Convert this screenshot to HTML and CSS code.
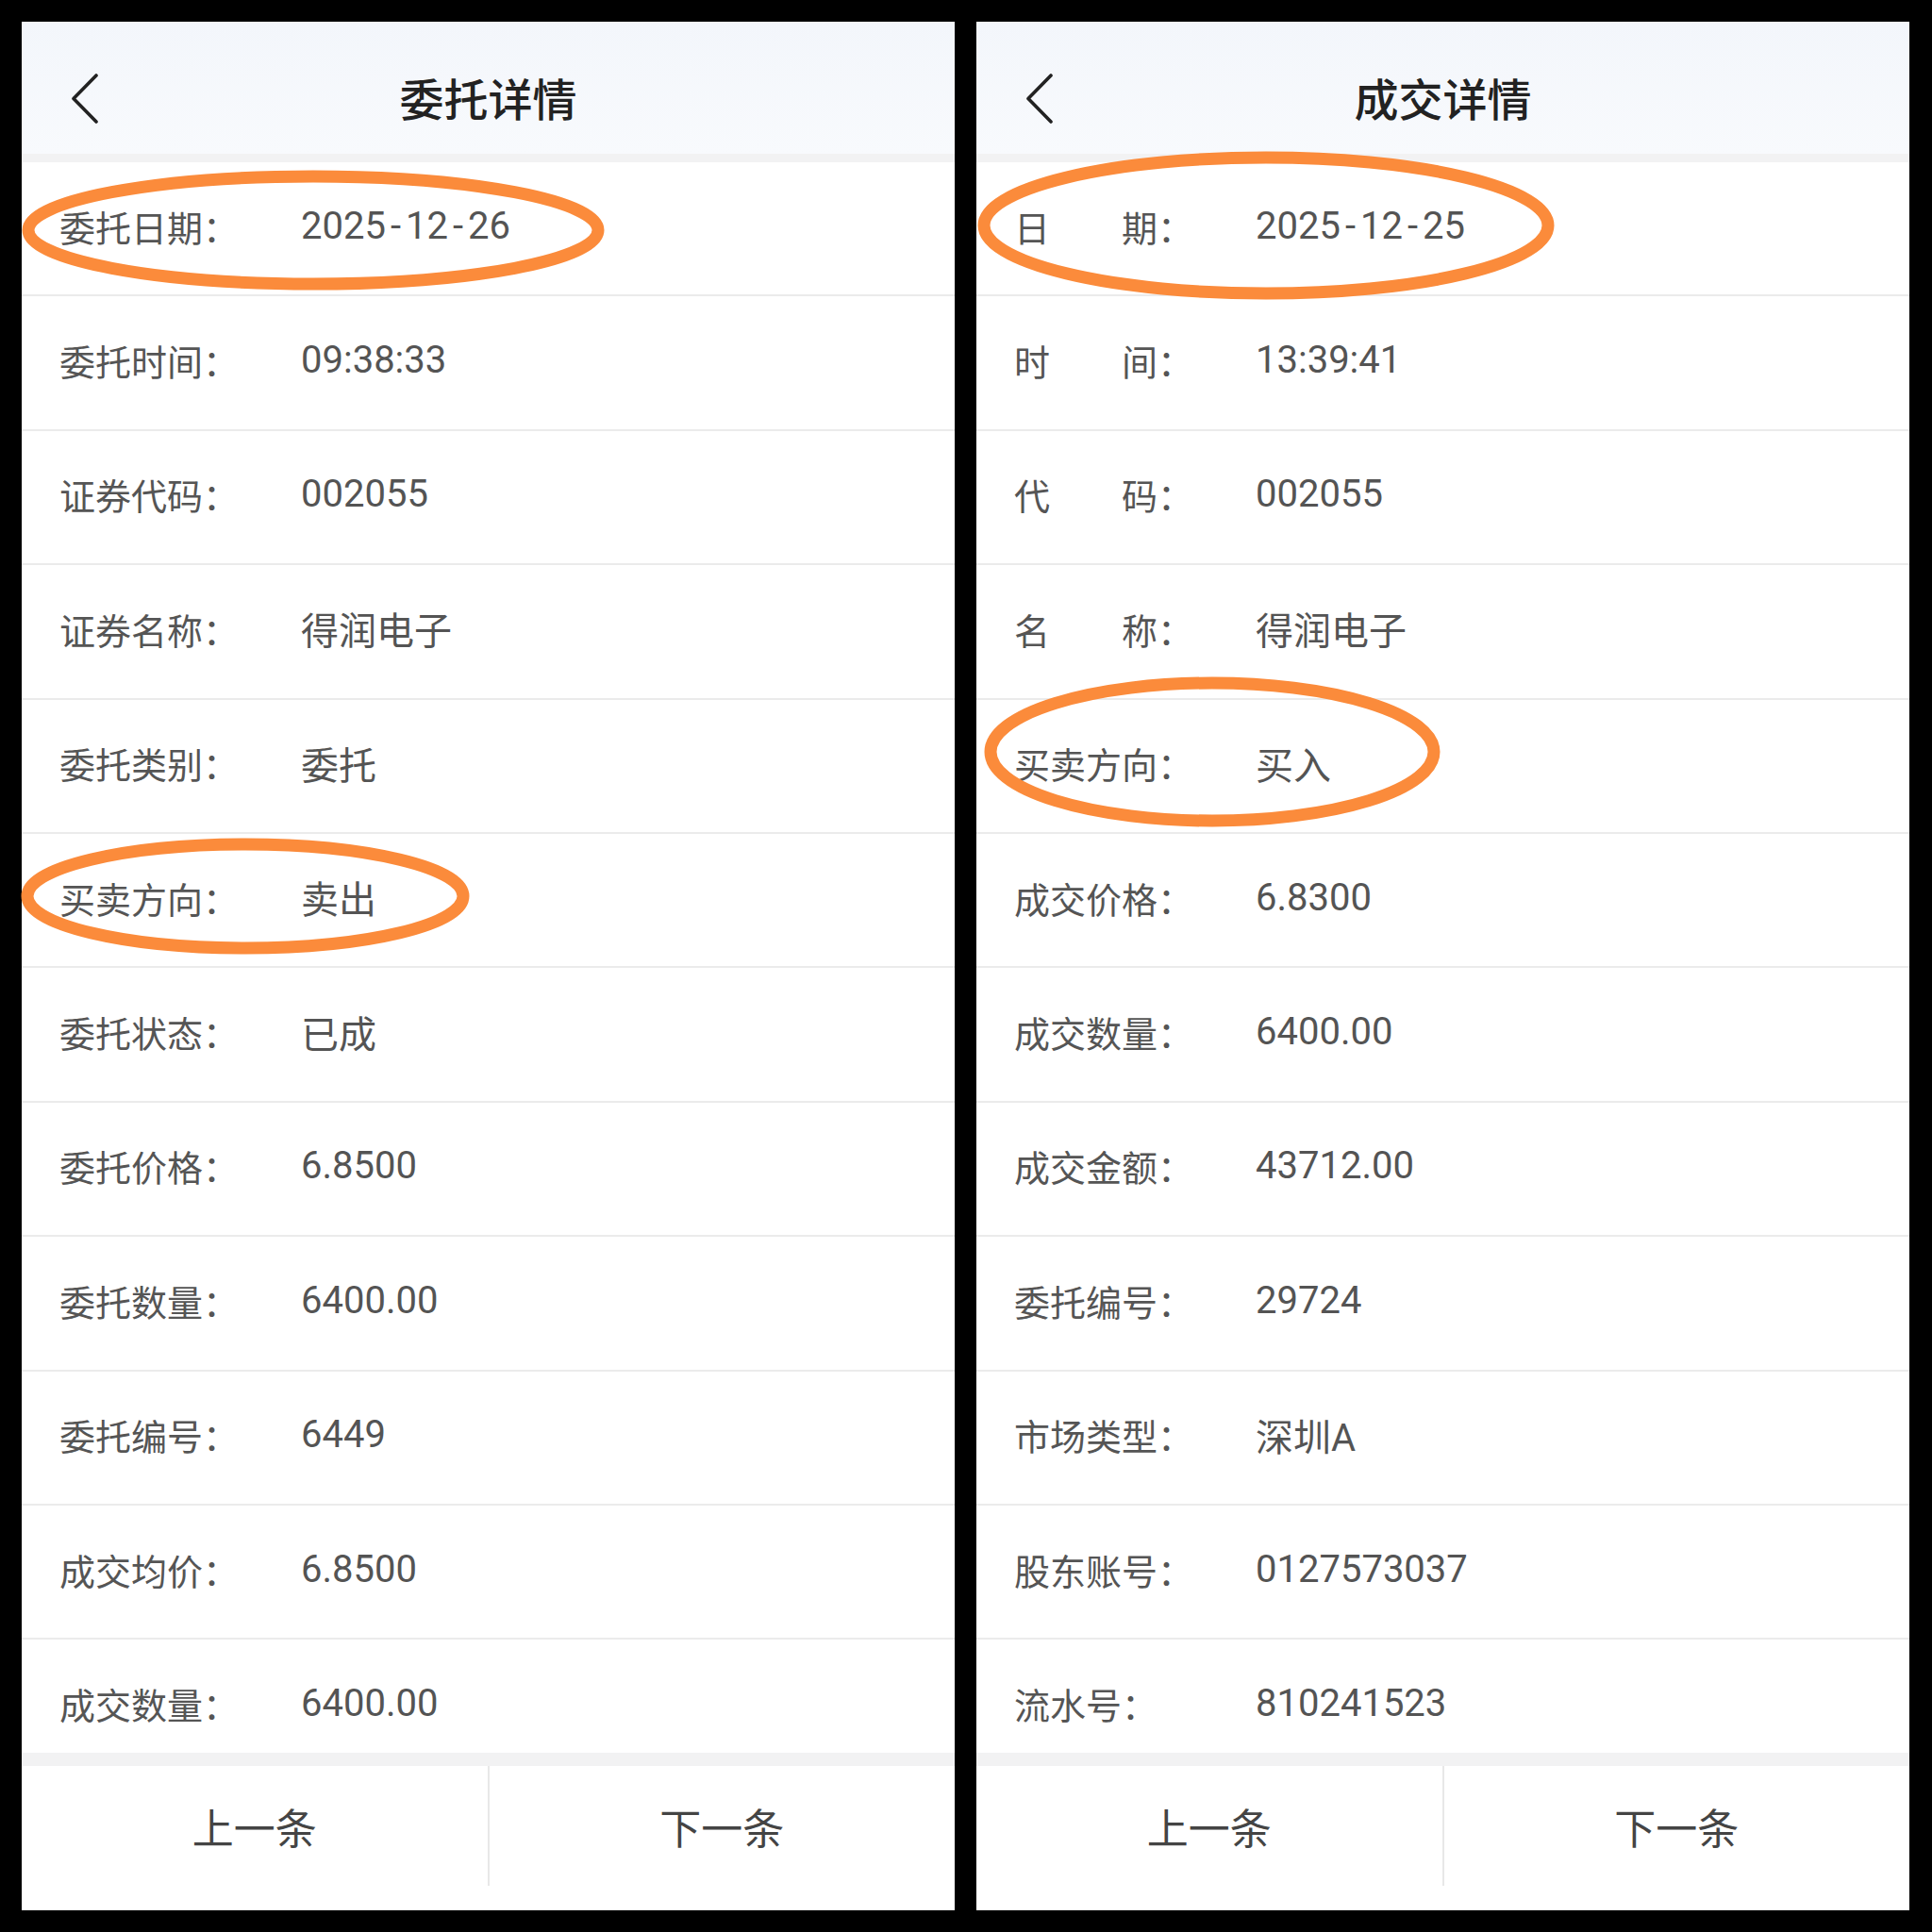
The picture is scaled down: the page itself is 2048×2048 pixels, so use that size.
FILE: index.html
```html
<!DOCTYPE html>
<html lang="zh-CN">
<head>
    <meta charset="UTF-8">
    <meta name="viewport" content="width=device-width, initial-scale=1.0">
    <title>委托详情 / 成交详情</title>
    <link rel="stylesheet" href="styles.css">
</head>
<body>
    <div class="screens">
        <!-- 委托详情 -->
        <div class="panel">
            <div class="header">
                <svg class="back" width="30" height="54" viewBox="0 0 30 54">
                    <path d="M27 2 L3 26.5 L27 51" fill="none" stroke="#222" stroke-width="3.6" stroke-linecap="round" stroke-linejoin="round"/>
                </svg>
                <div class="title">委托详情</div>
                <div></div>
            </div>
            <div class="strip"></div>
            <div class="list">
                <div class="row"><span class="label">委托日期：</span><span class="value">2025<span class="dash">-</span>12<span class="dash">-</span>26</span></div>
                <div class="row"><span class="label">委托时间：</span><span class="value">09:38:33</span></div>
                <div class="row"><span class="label">证券代码：</span><span class="value">002055</span></div>
                <div class="row"><span class="label">证券名称：</span><span class="value">得润电子</span></div>
                <div class="row"><span class="label">委托类别：</span><span class="value">委托</span></div>
                <div class="row"><span class="label">买卖方向：</span><span class="value">卖出</span></div>
                <div class="row"><span class="label">委托状态：</span><span class="value">已成</span></div>
                <div class="row"><span class="label">委托价格：</span><span class="value">6.8500</span></div>
                <div class="row"><span class="label">委托数量：</span><span class="value">6400.00</span></div>
                <div class="row"><span class="label">委托编号：</span><span class="value">6449</span></div>
                <div class="row"><span class="label">成交均价：</span><span class="value">6.8500</span></div>
                <div class="row"><span class="label">成交数量：</span><span class="value">6400.00</span></div>
            </div>
            <div class="strip strip-bottom"></div>
            <div class="footer">
                <div class="btn">上一条</div>
                <div class="btn">下一条</div>
            </div>
        </div>

        <!-- 成交详情 -->
        <div class="panel">
            <div class="header">
                <svg class="back" width="30" height="54" viewBox="0 0 30 54">
                    <path d="M27 2 L3 26.5 L27 51" fill="none" stroke="#222" stroke-width="3.6" stroke-linecap="round" stroke-linejoin="round"/>
                </svg>
                <div class="title">成交详情</div>
                <div></div>
            </div>
            <div class="strip"></div>
            <div class="list">
                <div class="row"><span class="label">日　　期：</span><span class="value">2025<span class="dash">-</span>12<span class="dash">-</span>25</span></div>
                <div class="row"><span class="label">时　　间：</span><span class="value">13:39:41</span></div>
                <div class="row"><span class="label">代　　码：</span><span class="value">002055</span></div>
                <div class="row"><span class="label">名　　称：</span><span class="value">得润电子</span></div>
                <div class="row"><span class="label">买卖方向：</span><span class="value">买入</span></div>
                <div class="row"><span class="label">成交价格：</span><span class="value">6.8300</span></div>
                <div class="row"><span class="label">成交数量：</span><span class="value">6400.00</span></div>
                <div class="row"><span class="label">成交金额：</span><span class="value">43712.00</span></div>
                <div class="row"><span class="label">委托编号：</span><span class="value">29724</span></div>
                <div class="row"><span class="label">市场类型：</span><span class="value">深圳A</span></div>
                <div class="row"><span class="label">股东账号：</span><span class="value">0127573037</span></div>
                <div class="row"><span class="label">流水号：</span><span class="value">810241523</span></div>
            </div>
            <div class="strip strip-bottom"></div>
            <div class="footer">
                <div class="btn">上一条</div>
                <div class="btn">下一条</div>
            </div>
        </div>
    </div>

    <!-- hand-drawn highlight marks over the screenshots -->
    <svg class="marks" width="2048" height="2048" viewBox="0 0 2048 2048">
        <ellipse cx="332" cy="244" rx="302" ry="57" />
        <ellipse cx="260" cy="950" rx="231" ry="55" />
        <ellipse cx="1342" cy="239" rx="299" ry="72" />
        <ellipse cx="1285" cy="797" rx="235" ry="73" />
    </svg>
</body>
</html>
```

FILE: styles.css
```css
* {
    margin: 0;
    padding: 0;
    box-sizing: border-box;
}

body {
    background-color: #000;
    width: 2048px;
    height: 2048px;
    position: relative;
    font-family: 'Roboto', 'Noto Sans CJK SC', sans-serif;
    color: #4a4a4a;
}

.screens {
    display: flex;
    gap: 23px;
    padding: 23px 24px 23px 23px;
    height: 2048px;
}

.panel {
    flex: 1;
    background-color: #fff;
    display: flex;
    flex-direction: column;
    overflow: hidden;
}

.header {
    height: 140px;
    padding: 24px 0 0 52px;
    display: grid;
    grid-template-columns: 1fr auto 1fr;
    align-items: center;
    background: linear-gradient(180deg, #f3f6fb 0%, #f8fafd 100%);
}

.back {
    display: block;
}

.title {
    font-family: 'Noto Sans CJK SC', sans-serif;
    font-size: 47px;
    font-weight: 500;
    color: #222;
    margin: -6px 0 0 -52px;
}

.strip {
    height: 9px;
    background-color: #f2f2f3;
}

.strip-bottom {
    height: 14px;
}

.list {
    flex: 1;
    overflow: hidden;
}

.row {
    height: 142.4px;
    border-bottom: 2px solid #ebebeb;
    display: flex;
    align-items: center;
    padding: 0 0 6px 40px;
    font-size: 38px;
}

.label {
    width: 256px;
    flex-shrink: 0;
    font-family: 'Noto Sans CJK SC', sans-serif;
    color: #555;
}

.value {
    font-size: 40px;
    color: #545454;
}

.dash {
    margin: 0 5px;
}

.footer {
    height: 153px;
    padding-bottom: 26px;
    display: flex;
}

.btn {
    flex: 1;
    display: flex;
    align-items: center;
    justify-content: center;
    font-family: 'Noto Sans CJK SC', sans-serif;
    font-size: 44px;
    color: #444;
}

.btn:first-child {
    border-right: 2px solid #e8e8e8;
}

.marks {
    position: absolute;
    top: 0;
    left: 0;
    pointer-events: none;
}

.marks ellipse {
    fill: none;
    stroke: #fb8b3b;
    stroke-width: 13;
}
```
